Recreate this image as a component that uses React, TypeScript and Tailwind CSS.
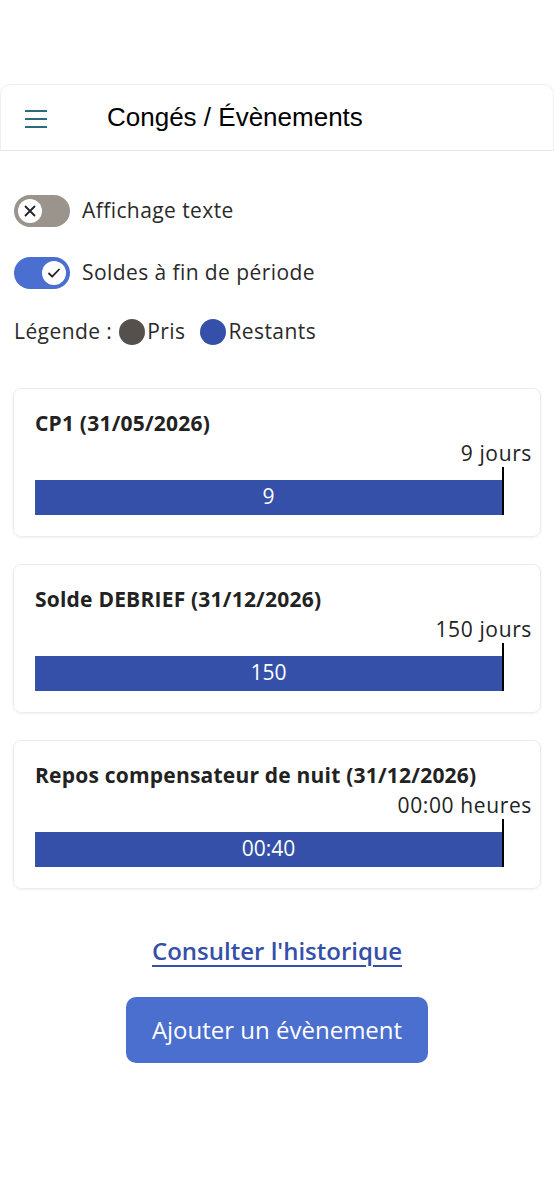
const soldes = [
  { title: "CP1 (31/05/2026)", label: "9 jours", value: "9" },
  { title: "Solde DEBRIEF (31/12/2026)", label: "150 jours", value: "150" },
  { title: "Repos compensateur de nuit (31/12/2026)", label: "00:00 heures", value: "00:40" },
];

function Toggle({ on, label }: { on: boolean; label: string }) {
  return (
    <div className="flex items-center gap-[12px]">
      <div
        className={
          on
            ? "w-[56px] h-[32px] rounded-full bg-[#4a6fd0] flex items-center justify-end px-[4px]"
            : "w-[56px] h-[32px] rounded-full bg-[#9b948d] flex items-center justify-start px-[4px]"
        }
      >
        <div className="w-[24px] h-[24px] rounded-full bg-white flex items-center justify-center">
          {on ? (
            <svg width="16" height="16" viewBox="0 0 16 16" fill="none" stroke="#222" strokeWidth="1.8" strokeLinecap="round" strokeLinejoin="round">
              <path d="M3 8.5l3.2 3.2L13 4.5" />
            </svg>
          ) : (
            <svg width="14" height="14" viewBox="0 0 14 14" fill="none" stroke="#222" strokeWidth="1.8" strokeLinecap="round">
              <path d="M2.5 2.5l9 9M11.5 2.5l-9 9" />
            </svg>
          )}
        </div>
      </div>
      <span className="text-[21px] tracking-[0.02em] text-[#2a2a2a]">{label}</span>
    </div>
  );
}

export default function App() {
  return (
    <div className="min-h-[1200px] bg-white pt-[84px] font-['Open_Sans',sans-serif]">
      <div className="rounded-t-[10px] border-t border-x border-[#eeeeee]">
        <div className="h-[66px] flex items-center border-b border-[#e6e6e6] px-[24px]">
          <svg width="22" height="20" viewBox="0 0 22 20" stroke="#2b6a7c" strokeWidth="2">
            <path d="M0 3h22M0 11h22M0 19h22" />
          </svg>
          <h1 className="ml-[60px] text-[26px] font-medium text-black font-['Liberation_Sans',sans-serif]">
            Congés / Évènements
          </h1>
        </div>
      </div>

      <div className="px-[14px] pt-[44px] flex flex-col gap-[30px]">
        <Toggle on={false} label="Affichage texte" />
        <Toggle on={true} label="Soldes à fin de période" />
      </div>

      <div className="px-[14px] mt-[27px] flex items-center text-[21px] tracking-[0.02em] text-[#2a2a2a]">
        <span>Légende :</span>
        <span className="ml-[7px] w-[26px] h-[26px] rounded-full bg-[#55504c]" />
        <span className="ml-[2px]">Pris</span>
        <span className="ml-[15px] w-[26px] h-[26px] rounded-full bg-[#3450a8]" />
        <span className="ml-[2px]">Restants</span>
      </div>

      <div className="px-[13px] mt-[40px] flex flex-col gap-[27px]">
        {soldes.map((s) => (
          <div
            key={s.title}
            className="h-[149px] rounded-[8px] border border-[#ececec] shadow-[0_1px_3px_rgba(0,0,0,0.06)] pl-[21px] pr-[8px] pt-[20px]"
          >
            <div className="text-[21px] font-bold tracking-[0.01em] text-[#222] leading-[28px]">{s.title}</div>
            <div className="mt-[2px] text-right text-[21px] tracking-[0.03em] text-[#222] leading-[28px]">{s.label}</div>
            <div className="flex items-end mr-[28px]">
              <div className="flex-1 h-[35px] bg-[#3450a8] flex items-center justify-center text-white text-[21px]">
                {s.value}
              </div>
              <div className="w-[2px] h-[48px] bg-black" />
            </div>
          </div>
        ))}
      </div>

      <div className="flex flex-col items-center mt-[44px]">
        <a className="text-[24px] font-semibold text-[#3450a8] underline underline-offset-[5px] decoration-[2px]">
          Consulter l'historique
        </a>
        <button className="mt-[28px] w-[302px] h-[66px] rounded-[10px] bg-[#4a6fcf] text-white text-[24px] font-medium">
          Ajouter un évènement
        </button>
      </div>
    </div>
  );
}
